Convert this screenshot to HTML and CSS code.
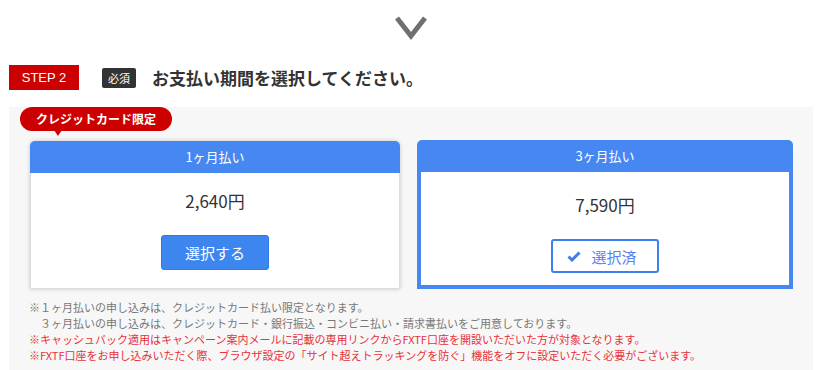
FILE: index.html
```html
<!DOCTYPE html>
<html lang="ja">
<head>
    <meta charset="UTF-8">
    <meta name="viewport" content="width=device-width, initial-scale=1.0">
    <title>お支払い期間の選択</title>
    <link rel="stylesheet" href="styles.css">
</head>
<body>
    <div class="arrow">
        <svg width="34" height="26" viewBox="0 0 34 26">
            <polyline points="3,3 17,21 31,3" fill="none" stroke="#707070" stroke-width="5"/>
        </svg>
    </div>

    <div class="step-head">
        <span class="step-no">STEP 2</span>
        <span class="required">必須</span>
        <h2>お支払い期間を選択してください。</h2>
    </div>

    <section class="panel">
        <span class="credit-only">クレジットカード限定</span>

        <div class="plans">
            <div class="plan">
                <div class="plan-title">1ヶ月払い</div>
                <div class="plan-body">
                    <p class="price">2,640円</p>
                    <button class="btn-select">選択する</button>
                </div>
            </div>

            <div class="plan selected">
                <div class="plan-title">3ヶ月払い</div>
                <div class="plan-body">
                    <p class="price">7,590円</p>
                    <button class="btn-selected">
                        <svg width="14" height="11" viewBox="0 0 14 11">
                            <polyline points="1.5,5.5 5,9 12.5,1.5" fill="none" stroke="#3d7ff0" stroke-width="3"/>
                        </svg>
                        選択済
                    </button>
                </div>
            </div>
        </div>

        <div class="notes">
            <p>※１ヶ月払いの申し込みは、クレジットカード払い限定となります。</p>
            <p class="indent">３ヶ月払いの申し込みは、クレジットカード・銀行振込・コンビニ払い・請求書払いをご用意しております。</p>
            <p class="warn">※キャッシュバック適用はキャンペーン案内メールに記載の専用リンクからFXTF口座を開設いただいた方が対象となります。</p>
            <p class="warn">※FXTF口座をお申し込みいただく際、ブラウザ設定の「サイト超えトラッキングを防ぐ」機能をオフに設定いただく必要がございます。</p>
        </div>
    </section>
</body>
</html>
```

FILE: styles.css
```css
* {
    margin: 0;
    padding: 0;
    box-sizing: border-box;
}

body {
    font-family: "Noto Sans CJK JP", "Noto Sans", sans-serif;
    color: #333;
    background: #fff;
}

.arrow {
    display: flex;
    justify-content: center;
    padding-top: 15px;
    height: 65px;
}

.arrow svg {
    margin-left: 2px;
}

/* Step heading */
.step-head {
    display: flex;
    align-items: center;
    height: 25px;
    margin-left: 9px;
}

.step-no {
    width: 70px;
    height: 25px;
    line-height: 25px;
    text-align: center;
    background: #cc0000;
    color: #fff;
    font-family: "Liberation Sans", sans-serif;
    font-size: 13px;
}

.required {
    margin-left: 23px;
    width: 34px;
    height: 20px;
    line-height: 20px;
    text-align: center;
    background: #333;
    color: #fff;
    border-radius: 2px;
    font-size: 11px;
}

.step-head h2 {
    margin-left: 16px;
    font-size: 17px;
    font-weight: bold;
    color: #333;
    line-height: 25px;
}

/* Panel */
.panel {
    width: 804px;
    margin: 20px 0 0 9px;
    padding: 0 20px 10px 21px;
    background: #f7f7f7;
}

.credit-only {
    position: relative;
    display: block;
    margin: -3px 0 0 -10px;
    width: 152px;
    height: 24px;
    line-height: 24px;
    text-align: center;
    background: #cc0000;
    color: #fff;
    font-size: 12px;
    font-weight: bold;
    border-radius: 12px;
}

.credit-only::after {
    content: "";
    position: absolute;
    left: 34px;
    bottom: -5px;
    border-left: 4px solid transparent;
    border-right: 4px solid transparent;
    border-top: 6px solid #cc0000;
}

.plans {
    display: grid;
    grid-template-columns: 370px 376px;
    gap: 17px;
    margin-top: 9px;
}

.plan {
    background: #fff;
    border-radius: 5px 5px 0 0;
    text-align: center;
}

.plan-title {
    height: 32px;
    line-height: 32px;
    background: #4687f1;
    color: #fff;
    font-size: 13px;
    border-radius: 5px 5px 0 0;
}

.plan:first-child {
    margin-top: 1px;
    border: 1px solid #ddd;
    box-shadow: 0 0 4px rgba(0, 0, 0, 0.2);
}

.plan:first-child .plan-title {
    margin: -1px -1px 0;
}

.plan-body {
    padding: 16px 0 18px;
}

.price {
    font-size: 17px;
    line-height: 24px;
    margin-bottom: 22px;
}

.btn-select {
    width: 108px;
    height: 35px;
    font-family: inherit;
    font-size: 15px;
    color: #fff;
    background: #3d86f0;
    border: 1px solid #2f78e8;
    border-radius: 3px;
    cursor: pointer;
}

.plan.selected {
    border: 4px solid #4687f1;
    background: #4687f1;
}

.plan.selected .plan-title {
    height: 28px;
    line-height: 24px;
    border-radius: 0;
}

.plan.selected .plan-body {
    background: #fff;
    padding: 21px 0 12px;
}

.btn-selected {
    display: inline-flex;
    align-items: center;
    justify-content: center;
    gap: 10px;
    width: 108px;
    height: 34px;
    font-family: inherit;
    font-size: 15px;
    color: #5b7ff0;
    background: #fff;
    border: 2px solid #3d7ff0;
    border-radius: 3px;
    padding-right: 6px;
}

/* Notes */
.notes {
    margin-top: 10px;
    margin-left: -1px;
    font-size: 11px;
    line-height: 16px;
    color: #777;
}

.notes .indent {
    padding-left: 1em;
}

.notes .warn {
    color: #e8313a;
}
```
